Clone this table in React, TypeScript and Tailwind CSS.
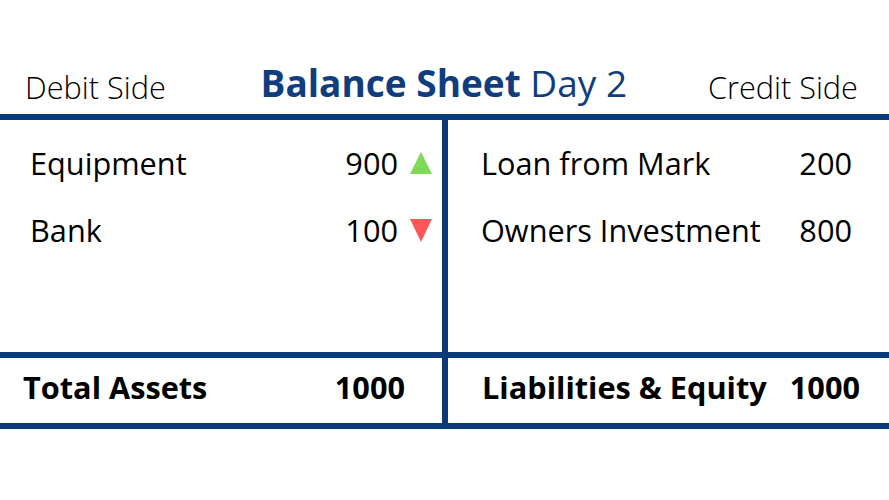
const BLUE = 'border-[#0b3a7c]';

function TriUp() {
  return (
    <svg width="22" height="22" viewBox="0 0 22 22" className="shrink-0">
      <polygon points="11,0 22,22 0,22" fill="#7ed957" />
    </svg>
  );
}

function TriDown() {
  return (
    <svg width="22" height="23" viewBox="0 0 22 23" className="shrink-0">
      <polygon points="0,0 22,0 11,23" fill="#ff5757" />
    </svg>
  );
}

function Row({ label, value, icon }: { label: string; value: string; icon?: React.ReactNode }) {
  return (
    <div className="flex items-center justify-between leading-[30px]">
      <span>{label}</span>
      <span className="flex items-center gap-[12px]">
        {value}
        {icon}
      </span>
    </div>
  );
}

export default function App() {
  return (
    <div
      className="w-[889px] h-[500px] bg-white text-black overflow-hidden"
      style={{ fontFamily: '"Open Sans", "Liberation Sans", sans-serif' }}
    >
      {/* header */}
      <div className="h-[114px] pt-[63px] pl-[25px] pr-[31px] flex items-baseline justify-between leading-[40px]">
        <span className="text-[30.7px] font-light translate-y-[2px]">Debit Side</span>
        <span className="ml-[14px] text-[37px] text-[#0f3d7e]">
          <b className="font-bold">Balance Sheet</b> Day 2
        </span>
        <span className="text-[30.7px] font-light translate-y-[2px]">Credit Side</span>
      </div>

      {/* table */}
      <div className={`border-y-[6px] ${BLUE} flex`}>
        <div className="w-[442px]">
          <div className="h-[232px] pt-[28px] pl-[30px] pr-[10px] flex flex-col gap-[37px] text-[30.7px]">
            <Row label="Equipment" value="900" icon={<TriUp />} />
            <Row label="Bank" value="100" icon={<TriDown />} />
          </div>
          <div className={`h-[71px] border-t-[6px] ${BLUE} pt-[14px] pl-[23px] pr-[37px] flex items-start justify-between text-[30.7px] leading-[30px] font-bold`}>
            <span>Total Assets</span>
            <span>1000</span>
          </div>
        </div>
        <div className={`flex-1 border-l-[6px] ${BLUE}`}>
          <div className="h-[232px] pt-[28px] pl-[33px] pr-[37px] flex flex-col gap-[37px] text-[30.7px]">
            <Row label="Loan from Mark" value="200" />
            <Row label="Owners Investment" value="800" />
          </div>
          <div className={`h-[71px] border-t-[6px] ${BLUE} pt-[14px] pl-[34px] pr-[29px] flex items-start justify-between text-[30.7px] leading-[30px] font-bold`}>
            <span>Liabilities &amp; Equity</span>
            <span>1000</span>
          </div>
        </div>
      </div>
    </div>
  );
}
